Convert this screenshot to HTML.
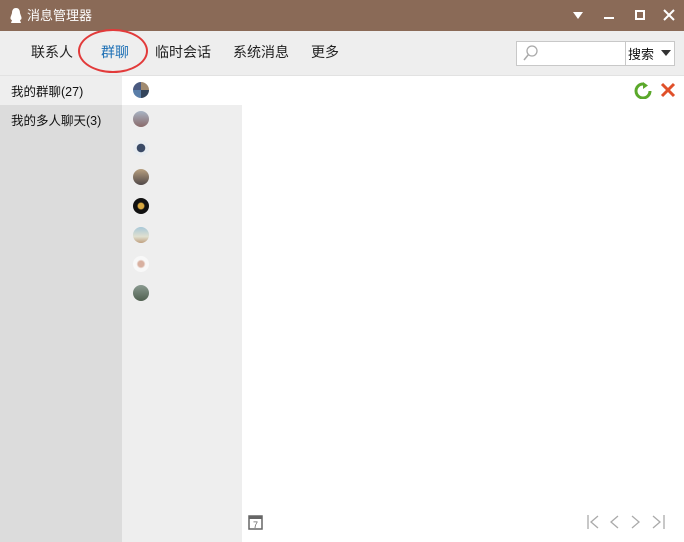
<!DOCTYPE html>
<html><head><meta charset="utf-8"><style>
*{margin:0;padding:0;box-sizing:border-box}
body{width:684px;height:542px;overflow:hidden;background:#fff;font-family:"Liberation Sans","Noto Sans CJK SC",sans-serif;position:relative}
.a{position:absolute}
.title{left:0;top:0;width:684px;height:31px;background:#8a6a57;color:#fff;font-size:13px}
.tool{left:0;top:31px;width:684px;height:45px;background:#eeeeee;border-bottom:1px solid #e2e2e2}
.tab{top:42px;font-size:14px;color:#222}
.lp{left:0;top:76px;width:122px;height:466px;background:#dcdcdc}
.mid{left:122px;top:76px;width:120px;height:466px;background:#eeeeee}
.av{width:16px;height:16px;border-radius:50%;left:133px}
.lt{font-size:12.5px;color:#111;left:11px}
</style></head><body>
<div class="a title">
 <svg class="a" style="left:9px;top:7px" width="14" height="17" viewBox="0 0 14 17"><path d="M7 1C4 1 3 3.5 3 6L2 9C1 11 1.5 13 3 13L2 16H12L11 13C12.5 13 13 11 12 9L11 6C11 3.5 10 1 7 1Z" fill="#fff"/></svg>
 <span class="a" style="left:27px;top:5px">消息管理器</span>
 <svg class="a" style="left:572px;top:11px" width="12" height="9"><path d="M1 1H11L6 8Z" fill="#fff"/></svg>
 <div class="a" style="left:604px;top:17px;width:10px;height:2px;background:#fff"></div>
 <div class="a" style="left:635px;top:10px;width:10px;height:10px;border:2px solid #fff"></div>
 <svg class="a" style="left:663px;top:9px" width="12" height="12"><path d="M1 1L11 11M11 1L1 11" stroke="#fff" stroke-width="2"/></svg>
</div>
<div class="a tool"></div>
<span class="a tab" style="left:31px">联系人</span>
<span class="a tab" style="left:101px;color:#1c6fb5">群聊</span>
<div class="a" style="left:78px;top:29px;width:70px;height:44px;border:2px solid #e23a3a;border-radius:50%"></div>
<span class="a tab" style="left:155px">临时会话</span>
<span class="a tab" style="left:233px">系统消息</span>
<span class="a tab" style="left:311px">更多</span>
<div class="a" style="left:516px;top:41px;width:110px;height:25px;background:#fff;border:1px solid #c8c8c8"></div>
<svg class="a" style="left:522px;top:45px" width="16" height="17"><circle cx="10" cy="6" r="5" fill="none" stroke="#aaa" stroke-width="1.3"/><path d="M6.5 9.5L2 15" stroke="#aaa" stroke-width="1.5"/></svg>
<div class="a" style="left:625px;top:41px;width:50px;height:25px;background:#fff;border:1px solid #c8c8c8"></div>
<span class="a" style="left:628px;top:44px;font-size:13px;color:#111">搜索</span>
<svg class="a" style="left:661px;top:50px" width="10" height="7"><path d="M0 0H10L5 6Z" fill="#333"/></svg>
<div class="a lp"></div>
<div class="a" style="left:0;top:76px;width:122px;height:29px;background:#eeeeee"></div>
<span class="a lt" style="top:81px">我的群聊(27)</span>
<span class="a lt" style="top:110px">我的多人聊天(3)</span>
<div class="a mid"></div>
<div class="a" style="left:122px;top:76px;width:562px;height:29px;background:#fff"></div>
<div class="a av" style="top:82px;background:conic-gradient(#a08a70 0 25%,#33445a 0 50%,#5a7ea8 0 75%,#4a5a80 0)"></div>
<div class="a av" style="top:111px;background:linear-gradient(#a8b4c4,#8a6a6a)"></div>
<div class="a av" style="top:140px;background:radial-gradient(#3a4a66 35%,#e8ecf0 40%)"></div>
<div class="a av" style="top:169px;background:linear-gradient(#b8a080,#504848)"></div>
<div class="a av" style="top:198px;background:radial-gradient(#d8a840 25%,#111 35%)"></div>
<div class="a av" style="top:227px;background:linear-gradient(#a8c8d8,#e0e0d0 60%,#c0a080)"></div>
<div class="a av" style="top:256px;background:radial-gradient(#d8b0a0 25%,#f8f8f8 40%)"></div>
<div class="a av" style="top:285px;background:linear-gradient(#8a9a90,#506050)"></div>
<svg class="a" style="left:634px;top:82px" width="18" height="17"><path d="M9 2A7 7 0 1 0 16 9" fill="none" stroke="#5aa82a" stroke-width="3"/><path d="M9 0L14 3.5L9 7Z" fill="#5aa82a"/></svg>
<svg class="a" style="left:660px;top:82px" width="16" height="16"><path d="M2 2L14 14M14 2L2 14" stroke="#e0502a" stroke-width="3"/></svg>
<svg class="a" style="left:248px;top:514px" width="16" height="16"><rect x="1" y="2" width="13" height="13" fill="none" stroke="#666" stroke-width="1.5"/><rect x="1" y="2" width="13" height="3" fill="#666"/><text x="5" y="14" font-size="9" fill="#666" font-family="Liberation Sans">7</text></svg>
<svg class="a" style="left:586px;top:514px" width="84" height="16" fill="none" stroke="#aaa" stroke-width="1.3"><path d="M2 1V15M12 2L5 8L12 14"/><path d="M32 2L25 8L32 14"/><path d="M46 2L53 8L46 14"/><path d="M67 2L74 8L67 14M78 1V15"/></svg>
</body></html>
